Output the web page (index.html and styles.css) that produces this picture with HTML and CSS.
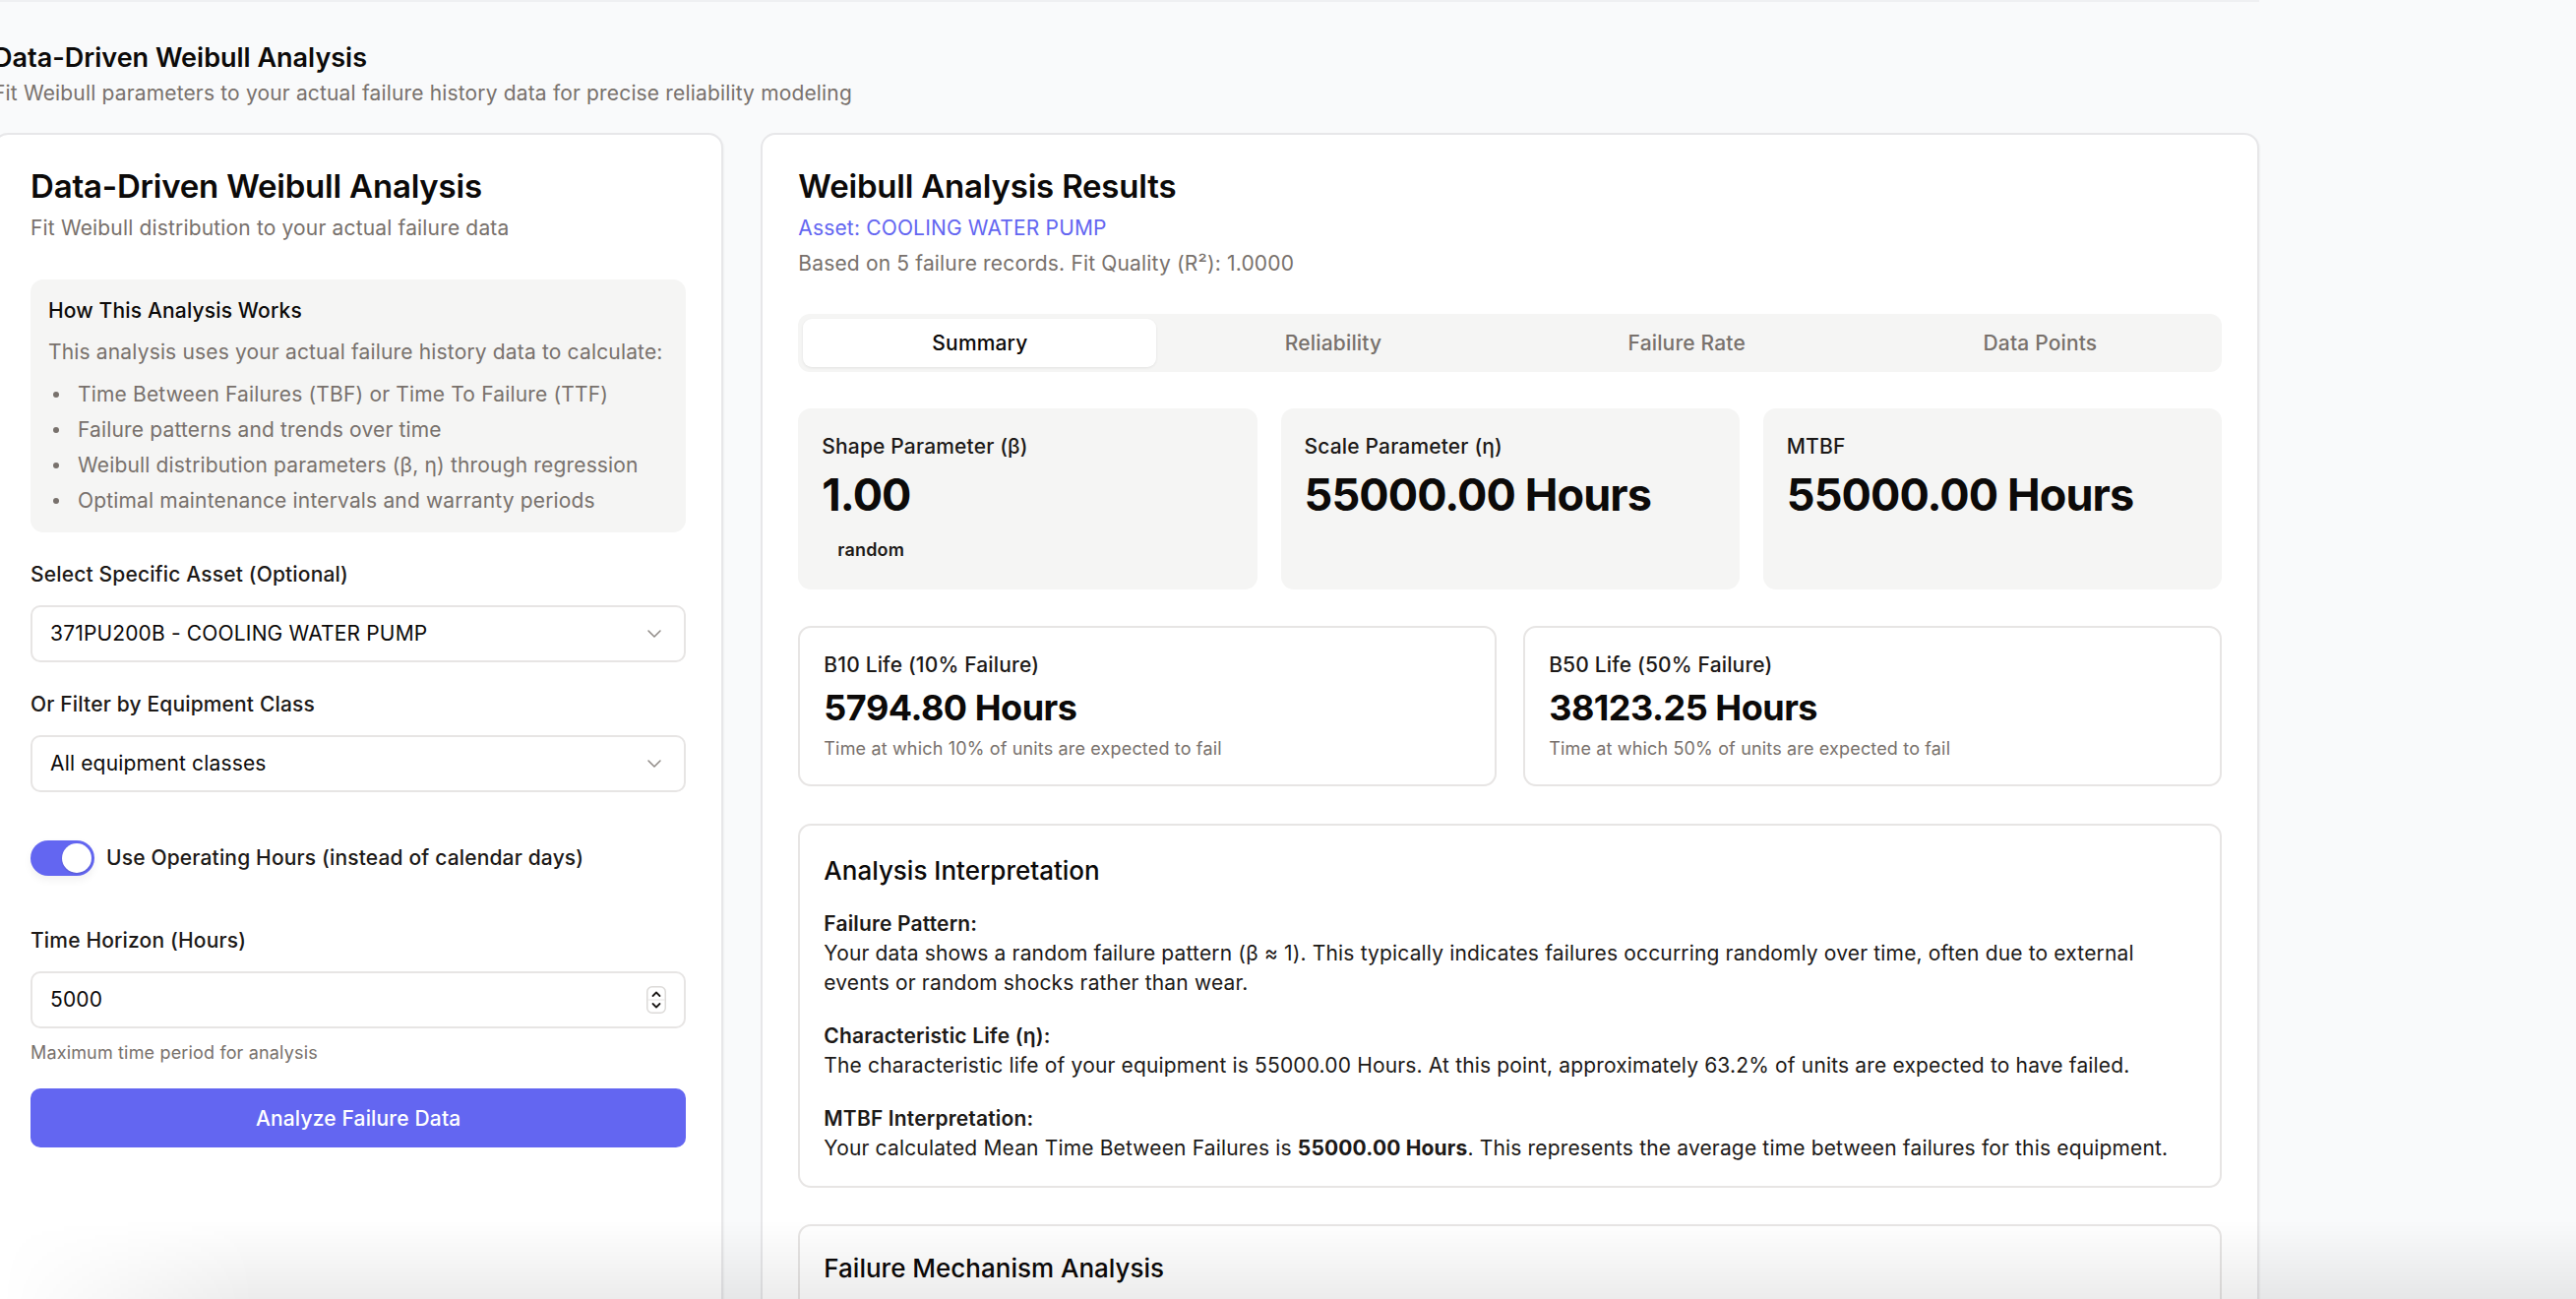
FILE: index.html
```html
<!DOCTYPE html>
<html lang="en">
<head>
<meta charset="utf-8">
<title>Data-Driven Weibull Analysis</title>
<link rel="stylesheet" href="styles.css">
</head>
<body>
<div class="topline"></div>
<main class="page">
  <header class="page-header">
    <h1 class="page-title">Data-Driven Weibull Analysis</h1>
    <p class="page-sub">Fit Weibull parameters to your actual failure history data for precise reliability modeling</p>
  </header>

  <div class="layout">
    <section class="card card-left">
      <h2 class="card-title">Data-Driven Weibull Analysis</h2>
      <p class="card-desc">Fit Weibull distribution to your actual failure data</p>

      <div class="info">
        <h3 class="info-title">How This Analysis Works</h3>
        <p class="info-text">This analysis uses your actual failure history data to calculate:</p>
        <ul class="info-list">
          <li>Time Between Failures (TBF) or Time To Failure (TTF)</li>
          <li>Failure patterns and trends over time</li>
          <li>Weibull distribution parameters (β, η) through regression</li>
          <li>Optimal maintenance intervals and warranty periods</li>
        </ul>
      </div>

      <div class="field-group first">
        <div class="field-label">Select Specific Asset (Optional)</div>
        <div class="select">
          <span class="select-value">371PU200B - COOLING WATER PUMP</span>
          <svg class="chev" width="24" height="24" viewBox="0 0 24 24" fill="none" stroke="currentColor" stroke-width="1.5" stroke-linecap="round" stroke-linejoin="round"><path d="m6 9 6 6 6-6"/></svg>
        </div>
      </div>

      <div class="field-group">
        <div class="field-label">Or Filter by Equipment Class</div>
        <div class="select">
          <span class="select-value">All equipment classes</span>
          <svg class="chev" width="24" height="24" viewBox="0 0 24 24" fill="none" stroke="currentColor" stroke-width="1.5" stroke-linecap="round" stroke-linejoin="round"><path d="m6 9 6 6 6-6"/></svg>
        </div>
      </div>

      <div class="toggle-row">
        <span class="toggle"><span class="knob"></span></span>
        <span class="toggle-label">Use Operating Hours (instead of calendar days)</span>
      </div>

      <div class="field-group time">
        <div class="field-label">Time Horizon (Hours)</div>
        <div class="input">
          <span class="input-value">5000</span>
          <svg class="spin" width="20" height="28" viewBox="0 0 20 28" fill="none">
            <rect x="0.75" y="0.75" width="18.5" height="26.5" rx="5" fill="#fff" stroke="#dcdad8" stroke-width="1.5"/>
            <line x1="1" y1="14" x2="19" y2="14" stroke="#e7e5e4" stroke-width="1"/>
            <path d="M6.5 10 L10 6.5 L13.5 10" stroke="#1c1917" stroke-width="1.8" stroke-linecap="round" stroke-linejoin="round"/>
            <path d="M6.5 18 L10 21.5 L13.5 18" stroke="#1c1917" stroke-width="1.8" stroke-linecap="round" stroke-linejoin="round"/>
          </svg>
        </div>
        <p class="help">Maximum time period for analysis</p>
      </div>

      <button class="btn">Analyze Failure Data</button>
    </section>

    <section class="card card-right">
      <h2 class="card-title">Weibull Analysis Results</h2>
      <p class="asset">Asset: COOLING WATER PUMP</p>
      <p class="based">Based on 5 failure records. Fit Quality (R²): 1.0000</p>

      <div class="tabs">
        <div class="tab active">Summary</div>
        <div class="tab">Reliability</div>
        <div class="tab">Failure Rate</div>
        <div class="tab">Data Points</div>
      </div>

      <div class="metrics">
        <div class="metric">
          <div class="metric-label">Shape Parameter (β)</div>
          <div class="metric-value">1.00</div>
          <span class="badge">random</span>
        </div>
        <div class="metric">
          <div class="metric-label">Scale Parameter (η)</div>
          <div class="metric-value">55000.00 Hours</div>
        </div>
        <div class="metric">
          <div class="metric-label">MTBF</div>
          <div class="metric-value">55000.00 Hours</div>
        </div>
      </div>

      <div class="blife">
        <div class="bcard">
          <div class="metric-label">B10 Life (10% Failure)</div>
          <div class="bvalue">5794.80 Hours</div>
          <div class="bdesc">Time at which 10% of units are expected to fail</div>
        </div>
        <div class="bcard">
          <div class="metric-label">B50 Life (50% Failure)</div>
          <div class="bvalue">38123.25 Hours</div>
          <div class="bdesc">Time at which 50% of units are expected to fail</div>
        </div>
      </div>

      <div class="panel interp">
        <h3 class="panel-title">Analysis Interpretation</h3>
        <div class="section">
          <div class="section-label">Failure Pattern:</div>
          <p class="section-text">Your data shows a random failure pattern (β ≈ 1). This typically indicates failures occurring randomly over time, often due to external events or random shocks rather than wear.</p>
        </div>
        <div class="section">
          <div class="section-label">Characteristic Life (η):</div>
          <p class="section-text">The characteristic life of your equipment is 55000.00 Hours. At this point, approximately 63.2% of units are expected to have failed.</p>
        </div>
        <div class="section">
          <div class="section-label">MTBF Interpretation:</div>
          <p class="section-text">Your calculated Mean Time Between Failures is <strong>55000.00 Hours</strong>. This represents the average time between failures for this equipment.</p>
        </div>
      </div>

      <div class="panel mech">
        <h3 class="panel-title">Failure Mechanism Analysis</h3>
      </div>
    </section>
  </div>
</main>
<div class="bottom-fade"></div>
</body>
</html>
```

FILE: styles.css
```css
* { box-sizing: border-box; margin: 0; padding: 0; }
html, body { background: #f9fafb; }
body {
  font-family: Inter, "Noto Sans", sans-serif;
  color: #0c0a09;
  letter-spacing: 0.16px;
  width: 2618px;
  height: 1320px;
  overflow: hidden;
}
.topline { height: 2px; width: 2296px; background: #eff0f2; }
.page { margin-left: -7px; width: 2303px; padding-top: 37px; }
.page-title { font-size: 27px; font-weight: 600; line-height: 40px; letter-spacing: 0; }
.page-sub { font-size: 21px; line-height: 30px; color: #78716c; margin-top: 1px; }

.layout {
  display: grid;
  grid-template-columns: repeat(3, 1fr);
  gap: 38px;
  margin-top: 25px;
}
.card {
  background: #fff;
  border: 2px solid #e7e7e9;
  border-radius: 15px;
  box-shadow: 1px 1px 2px rgba(0,0,0,0.04);
}
.card-left { padding: 30px 36px; min-height: 1400px; }
.card-right { grid-column: span 2; padding: 30px 36px; }

.card-title { font-size: 33px; font-weight: 600; line-height: 44px; letter-spacing: -0.2px; }
.card-desc { font-size: 21px; line-height: 30px; color: #78716c; margin-top: 6px; }

.info {
  margin-top: 37px;
  background: #f5f5f4;
  border-radius: 13px;
  padding: 17px 18px;
}
.info-title { font-size: 21px; font-weight: 450; line-height: 30px; }
.info-text { font-size: 21px; line-height: 30px; color: #78716c; margin-top: 12px; }
.info-list { list-style: none; margin-top: 13px; display: flex; flex-direction: column; gap: 6px; }
.info-list li {
  display: flex; align-items: center;
  font-size: 21px; line-height: 30px; color: #78716c;
}
.info-list li::before {
  content: ""; width: 6px; height: 6px; border-radius: 50%;
  background: #78716c; margin-left: 5px; margin-right: 19px; flex: none;
}

.field-group { margin-top: 28px; }
.field-group.time { margin-top: 51px; }
.field-label { font-size: 21px; font-weight: 450; line-height: 30px; color: #1c1917; }
.select, .input {
  margin-top: 16px;
  height: 58px;
  border: 2px solid #e7e5e4;
  border-radius: 10px;
  background: #fff;
  display: flex; align-items: center; justify-content: space-between;
  padding: 0 18px 0 18px;
}
.select-value, .input-value { font-size: 21px; line-height: 30px; color: #0c0a09; }
.chev { color: #8f8a86; }

.toggle-row { display: flex; align-items: center; gap: 12px; margin-top: 49px; }
.toggle {
  width: 65px; height: 36px; border-radius: 18px; background: #6366f1;
  display: flex; align-items: center; justify-content: flex-end; padding: 0 3px;
  box-shadow: 0 4px 8px rgba(0,0,0,0.06);
}
.knob { width: 30px; height: 30px; border-radius: 50%; background: #fff; box-shadow: 0 1px 2px rgba(0,0,0,0.15); }
.toggle-label { font-size: 21px; font-weight: 450; line-height: 30px; color: #1c1917; }

.help { font-size: 18px; line-height: 27px; color: #78716c; margin-top: 11px; }
.btn {
  display: block; width: 100%; height: 60px; margin-top: 23px;
  background: #6366f1; color: #fff; border: none; border-radius: 10px;
  font-family: inherit; font-size: 21px; font-weight: 450; letter-spacing: 0.16px;
}

.asset { font-size: 21px; line-height: 30px; color: #6366f1; margin-top: 6px; }
.based { font-size: 21px; line-height: 30px; color: #78716c; margin-top: 6px; }

.tabs {
  margin-top: 36px; height: 59px; padding: 5px;
  background: #f5f5f4; border-radius: 12px;
  display: grid; grid-template-columns: repeat(4, 1fr);
}
.tab {
  display: flex; align-items: center; justify-content: center;
  font-size: 21px; font-weight: 450; color: #78716c; border-radius: 9px;
}
.tab.active { background: #fff; color: #0c0a09; box-shadow: 0 1px 3px rgba(0,0,0,0.08); }

.metrics { margin-top: 37px; display: grid; grid-template-columns: repeat(3, 1fr); gap: 24px; }
.metric { background: #f5f5f4; border-radius: 13px; padding: 24px; min-height: 184px; }
.metric-label { font-size: 21px; font-weight: 450; line-height: 30px; color: #1c1917; }
.metric-value { font-size: 45px; font-weight: 700; line-height: 54px; margin-top: 7px; letter-spacing: -0.9px; }
.badge {
  display: inline-block; margin-top: 12px; padding: 3px 16px;
  font-size: 18px; font-weight: 600; line-height: 27px; color: #1c1917;
}

.blife { margin-top: 37px; display: grid; grid-template-columns: 1fr 1fr; gap: 27px; }
.bcard { border: 2px solid #e7e5e4; border-radius: 13px; padding: 23px 24px; }
.bvalue { font-size: 36px; font-weight: 700; line-height: 44px; margin-top: 6px; letter-spacing: -0.5px; }
.bdesc { font-size: 18px; line-height: 27px; color: #78716c; margin-top: 6px; }

.panel { border: 2px solid #e7e5e4; border-radius: 13px; padding: 26px 24px 23px; margin-top: 38px; background: #fff; }
.panel-title { font-size: 26px; font-weight: 450; line-height: 40px; letter-spacing: 0; }
.section { margin-top: 24px; }
.section:first-of-type { margin-top: 19px; }
.section-label { font-size: 21px; font-weight: 600; line-height: 30px; color: #1c1917; }
.section-text { font-size: 21px; line-height: 30px; color: #1c1917; }
.section-text strong { font-weight: 700; }
.mech { min-height: 300px; margin-top: 37px; padding-top: 23px; }

.bottom-fade {
  position: fixed; left: 0; right: 0; bottom: 0; height: 80px;
  background: linear-gradient(to bottom, rgba(0,0,0,0), rgba(0,0,0,0.075));
  -webkit-mask-image: linear-gradient(to right, transparent 0, #000 260px);
  mask-image: linear-gradient(to right, transparent 0, #000 260px);
  pointer-events: none;
}
```
